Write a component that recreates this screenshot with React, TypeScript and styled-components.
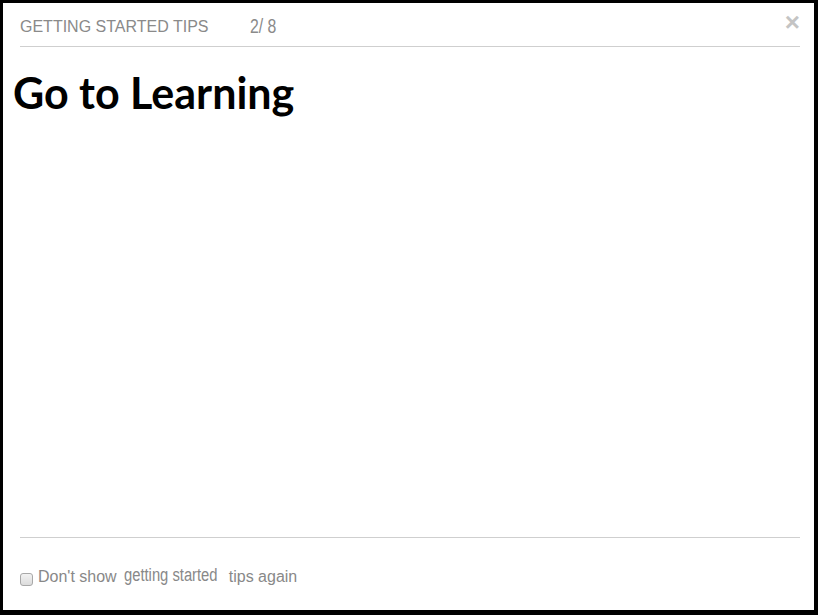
import React from 'react'
import styled, { createGlobalStyle } from 'styled-components'

const GlobalStyle = createGlobalStyle`
  html, body {
    margin: 0;
    padding: 0;
    background: #000;
  }
`

function App() {
  return (
    <>
      <GlobalStyle />
      <Frame>
        <Header>
          <HeaderTitle>GETTING STARTED TIPS</HeaderTitle>
          <Counter>2/ 8</Counter>
          <CloseButton aria-label="close">×</CloseButton>
        </Header>

        <Body>
          <Heading>Go to Learning</Heading>
        </Body>

        <Footer>
          <CheckLabel>
            <Check type="checkbox" />
            <span>Don't show</span>
            <NarrowText>getting started</NarrowText>
            <span>tips again</span>
          </CheckLabel>
        </Footer>
      </Frame>
    </>
  )
}

const Frame = styled.div`
  box-sizing: border-box;
  width: 818px;
  height: 615px;
  border-style: solid;
  border-color: #000;
  border-width: 3px 4px 5px 3px;
  background: #fff;
  display: flex;
  flex-direction: column;
  font-family: "Liberation Sans", Arial, sans-serif;
`

const Header = styled.div`
  position: relative;
  height: 44px;
  margin: 0 14px 0 17px;
  border-bottom: 1px solid #cfcfcf;
  display: flex;
  align-items: flex-start;
  padding-top: 15px;
  box-sizing: border-box;
`

const HeaderTitle = styled.span`
  font-size: 16px;
  color: #8a8a8a;
  line-height: 18px;
`

const Counter = styled.span`
  display: inline-block;
  margin-left: 42px;
  margin-top: -2px;
  margin-right: -7px;
  font-size: 20px;
  line-height: 20px;
  color: #8a8a8a;
  transform: scaleX(0.79);
  transform-origin: left center;
`

const CloseButton = styled.button`
  position: absolute;
  right: 0;
  top: 9px;
  border: 0;
  background: none;
  padding: 0;
  font-family: "Liberation Sans", Arial, sans-serif;
  font-size: 26px;
  font-weight: bold;
  line-height: 20px;
  color: #c4c4c4;
  cursor: pointer;
`

const Body = styled.div`
  flex: 1;
  padding: 20px 0 0 10px;
`

const Heading = styled.h1`
  margin: 0;
  font-family: Lato, "Noto Sans", sans-serif;
  font-weight: bold;
  font-size: 43px;
  line-height: 52px;
  color: #000;
`

const Footer = styled.div`
  height: 73px;
  margin: 0 14px 0 17px;
  border-top: 1px solid #cfcfcf;
  display: flex;
  align-items: flex-start;
  padding-top: 29px;
  box-sizing: border-box;
`

const CheckLabel = styled.label`
  display: flex;
  align-items: center;
  font-size: 16px;
  line-height: 20px;
  color: #888;
`

const Check = styled.input`
  appearance: none;
  box-sizing: border-box;
  margin: 4px 5px 0 0;
  width: 13px;
  height: 13px;
  border: 1px solid #a8a8a8;
  border-radius: 3px;
  background: linear-gradient(#f2f2f2, #dcdcdc);
`

const NarrowText = styled.span`
  display: inline-block;
  font-size: 18px;
  margin: -5px -9px 0 7px;
  transform: scaleX(0.82);
  transform-origin: left center;
`

export default App
